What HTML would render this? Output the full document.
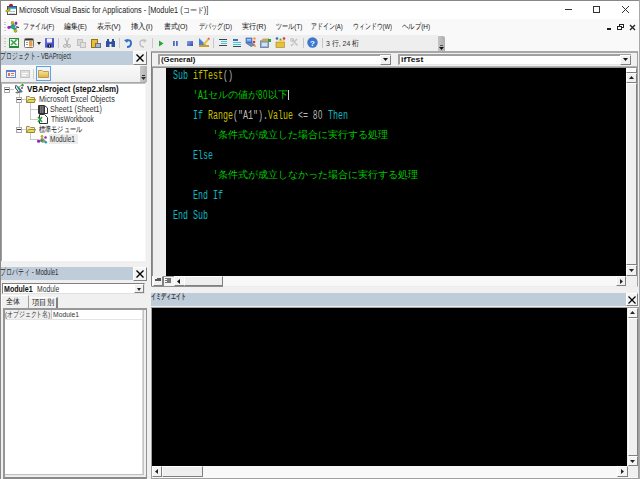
<!DOCTYPE html>
<html><head><meta charset="utf-8">
<style>
*{margin:0;padding:0;box-sizing:border-box}
html,body{width:640px;height:479px;overflow:hidden;background:#f0f0f0;font-family:"Liberation Sans",sans-serif;position:relative}
.a{position:absolute}
.t{position:absolute;white-space:nowrap;line-height:1}
.m{position:absolute;white-space:nowrap;line-height:1;font-size:8px;color:#111;top:23px}
.c{position:absolute;white-space:nowrap;line-height:10px;font-family:"Liberation Mono",monospace;font-size:8.333px;transform:scaleY(1.6);transform-origin:0 0}
.j{position:absolute;white-space:nowrap;line-height:10px;font-size:9.92px}
.sep{position:absolute;top:38px;width:1px;height:10px;background:#c8c8c8}
.btn3d{position:absolute;background:#f0f0f0;border-top:1px solid #fff;border-left:1px solid #fff;border-right:1px solid #808080;border-bottom:1px solid #808080}
.sunk{position:absolute;background:#fff;border-top:1px solid #808080;border-left:1px solid #808080;border-right:1px solid #e0e0e0;border-bottom:1px solid #e0e0e0}
</style></head><body>
<!-- ===== window frame / title ===== -->
<div class="a" style="left:0;top:0;width:640px;height:19px;background:#fff"></div>
<div class="a" style="left:0;top:0;width:640px;height:1px;background:#888"></div>
<div class="a" style="left:0;top:0;width:1px;height:479px;background:#888"></div>
<!-- title icon -->
<svg class="a" style="left:4px;top:3px" width="14" height="13" viewBox="0 0 14 13">
<rect x="3.5" y="3.5" width="9" height="8" fill="#fff" stroke="#505050"/>
<rect x="4" y="4" width="8" height="2" fill="#20c8e8"/>
<rect x="4" y="3.5" width="8" height="1" fill="#3050c0"/>
<rect x="5" y="8" width="6" height="1" fill="#c0c0c0"/><rect x="5" y="10" width="6" height="1" fill="#d0d0d0"/>
<ellipse cx="7" cy="2.3" rx="2" ry="1.5" fill="#c01818"/>
<path d="M1.5 8 L5 5.5 L6.5 6.8 L3 9.5 Z" fill="#c8c000" stroke="#606000" stroke-width="0.5"/>
</svg>
<div id="T1" class="t" style="transform:scaleX(0.879);transform-origin:0.0px 0;left:19.00px;top:6px;font-size:8.3px;color:#222">Microsoft Visual Basic for Applications - [Module1 (コード)]</div>
<!-- title buttons -->
<div class="a" style="left:565px;top:9px;width:7px;height:1px;background:#333"></div>
<div class="a" style="left:593px;top:6px;width:7px;height:7px;border:1px solid #333"></div>
<svg class="a" style="left:621px;top:5px" width="9" height="9" viewBox="0 0 9 9"><path d="M1 1L8 8M8 1L1 8" stroke="#333" stroke-width="1"/></svg>

<!-- ===== menu bar ===== -->
<div class="a" style="left:1px;top:19px;width:639px;height:32px;background:#f9f9f9"></div>
<div class="a" style="left:4px;top:22px;width:2px;height:1px;background:#c8c8c8"></div>
<div class="a" style="left:4px;top:24px;width:2px;height:1px;background:#c8c8c8"></div>
<div class="a" style="left:4px;top:27px;width:2px;height:1px;background:#c8c8c8"></div>
<div class="a" style="left:4px;top:30px;width:2px;height:1px;background:#c8c8c8"></div>
<svg class="a" style="left:7px;top:21px" width="13" height="12" viewBox="0 0 13 12">
<path d="M2.5 6 L6 3 L10.5 6 L8 9Z" fill="#18a0a8" stroke="#106060" stroke-width="0.5"/>
<path d="M10 6 L12 6.5" stroke="#222" stroke-width="1"/>
<ellipse cx="5.5" cy="2" rx="1.3" ry="1.7" fill="#c0c000" stroke="#606000" stroke-width="0.4"/>
<ellipse cx="9" cy="2.3" rx="1.3" ry="1.7" fill="#a818c0"/>
<ellipse cx="2" cy="6.5" rx="1.7" ry="1.4" fill="#a818c0"/>
<circle cx="5.5" cy="6" r="1.1" fill="#20c030"/>
<ellipse cx="8.5" cy="9.8" rx="1.4" ry="1.6" fill="#c0c000" stroke="#606000" stroke-width="0.4"/>
<circle cx="8.5" cy="6" r="0.8" fill="#e0f0f0"/>
</svg>
<div id="T2" class="m" style="transform:scaleX(0.750);transform-origin:2.0px 0;left:22.00px">ファイル(F)</div>
<div id="T3" class="m" style="transform:scaleX(0.852);transform-origin:0.0px 0;left:64.00px">編集(E)</div>
<div id="T4" class="m" style="transform:scaleX(0.889);transform-origin:0.0px 0;left:97.00px">表示(V)</div>
<div id="T5" class="m" style="transform:scaleX(0.917);transform-origin:0.0px 0;left:131.00px">挿入(I)</div>
<div id="T6" class="m" style="transform:scaleX(0.857);transform-origin:0.0px 0;left:164.00px">書式(O)</div>
<div id="T7" class="m" style="transform:scaleX(0.767);transform-origin:0.0px 0;left:199.00px">デバッグ(D)</div>
<div id="T8" class="m" style="transform:scaleX(0.889);transform-origin:0.0px 0;left:242.00px">実行(R)</div>
<div id="T9" class="m" style="transform:scaleX(0.765);transform-origin:0.0px 0;left:276.00px">ツール(T)</div>
<div id="T10" class="m" style="transform:scaleX(0.738);transform-origin:1.0px 0;left:311.00px">アドイン(A)</div>
<div id="T11" class="m" style="transform:scaleX(0.731);transform-origin:1.0px 0;left:353.00px">ウィンドウ(W)</div>
<div id="T12" class="m" style="transform:scaleX(0.800);transform-origin:0.0px 0;left:402.00px">ヘルプ(H)</div>
<!-- mdi buttons -->
<div class="a" style="left:607px;top:28px;width:4px;height:2px;background:#222"></div>
<svg class="a" style="left:617px;top:24px" width="7" height="6" viewBox="0 0 7 6"><rect x="2.5" y="0.5" width="4" height="3" fill="none" stroke="#222"/><rect x="0.5" y="2.5" width="4" height="3" fill="#fff" stroke="#222"/></svg>
<svg class="a" style="left:629px;top:24px" width="7" height="7" viewBox="0 0 7 7"><path d="M1 1L6 6M6 1L1 6" stroke="#222" stroke-width="1.3"/></svg>

<!-- ===== toolbar ===== -->
<div class="a" style="left:1px;top:35px;width:437px;height:16px;background:#eeeeee"></div>
<div class="a" style="left:438px;top:36px;width:7px;height:15px;background:linear-gradient(90deg,#c4c4c4,#b0b0b0);border-top-right-radius:2px"></div>
<div class="a" style="left:440px;top:45px;width:3px;height:1px;background:#555"></div>
<svg class="a" style="left:439px;top:47px" width="5" height="3" viewBox="0 0 5 3"><path d="M0 0H5L2.5 3Z" fill="#111"/></svg>
<div class="a" style="left:4px;top:38px;width:2px;height:1px;background:#c8c8c8"></div><div class="a" style="left:4px;top:41px;width:2px;height:1px;background:#c8c8c8"></div><div class="a" style="left:4px;top:43px;width:2px;height:1px;background:#c8c8c8"></div><div class="a" style="left:4px;top:46px;width:2px;height:1px;background:#c8c8c8"></div>
<!-- excel -->
<svg class="a" style="left:9px;top:38px" width="10" height="10" viewBox="0 0 10 10"><rect x="0.5" y="0.5" width="9" height="9" fill="#f4faf4" stroke="#2a8a3a"/><path d="M2 2L7.5 7M7.5 2L2 7" stroke="#3aa04a" stroke-width="1.6"/><rect x="1" y="8" width="8" height="1" fill="#2a8a3a"/><rect x="6" y="1" width="3" height="1" fill="#80c080"/></svg>
<!-- userform -->
<svg class="a" style="left:24px;top:38px" width="10" height="10" viewBox="0 0 10 10"><rect x="0.5" y="0.5" width="9" height="9" rx="1" fill="#fff" stroke="#777"/><rect x="1" y="1" width="8" height="1.5" fill="#333"/><rect x="5" y="3" width="3.5" height="5.5" fill="#e8a040"/><rect x="2" y="4" width="2" height="1" fill="#999"/><rect x="2" y="6" width="2" height="1" fill="#999"/></svg>
<svg class="a" style="left:37px;top:42px" width="4" height="3" viewBox="0 0 4 3"><path d="M0 0H4L2 3Z" fill="#222"/></svg>
<!-- save -->
<svg class="a" style="left:45px;top:38px" width="10" height="10" viewBox="0 0 10 10"><rect x="0" y="0" width="9" height="9.5" fill="#4a5ad0"/><rect x="0" y="0" width="9" height="9.5" fill="url(#sg)"/><defs><linearGradient id="sg" x1="0" y1="0" x2="1" y2="1"><stop offset="0" stop-color="#8890f0" stop-opacity="0.6"/><stop offset="1" stop-color="#2030a0" stop-opacity="0.4"/></linearGradient></defs><rect x="2" y="0.5" width="5" height="4" fill="#f4f4ff"/><rect x="2.5" y="6.5" width="3.5" height="3" fill="#1a1a30"/><rect x="4" y="7" width="1" height="2" fill="#a0a0c0"/></svg>
<div class="sep" style="left:58px"></div>
<!-- cut copy paste find -->
<svg class="a" style="left:63px;top:38px" width="8" height="10" viewBox="0 0 8 10"><path d="M2 0L5 7M6 0L3 7" stroke="#b0b0b0"/><circle cx="2" cy="8" r="1.5" fill="none" stroke="#b0b0b0"/><circle cx="6" cy="8" r="1.5" fill="none" stroke="#b0b0b0"/></svg>
<div class="a" style="left:77px;top:39px;width:6px;height:7px;background:#d8d8d8;border:1px solid #c0c0c0"></div>
<div class="a" style="left:80px;top:42px;width:6px;height:6px;background:#e0e0e0;border:1px solid #c0c0c0"></div>
<div class="a" style="left:91px;top:39px;width:7px;height:9px;background:#e8c030;border:1px solid #a07010"></div>
<div class="a" style="left:95px;top:43px;width:6px;height:5px;background:#a8b4c8;border:1px solid #607090"></div>
<svg class="a" style="left:105px;top:38px" width="11" height="10" viewBox="0 0 11 10"><rect x="1" y="3" width="3.5" height="6" fill="#3050a0"/><rect x="6.5" y="3" width="3.5" height="6" fill="#3050a0"/><rect x="2" y="1" width="2" height="3" fill="#3050a0"/><rect x="7" y="1" width="2" height="3" fill="#3050a0"/><rect x="4" y="4" width="3" height="2" fill="#3050a0"/></svg>
<div class="sep" style="left:119px"></div>
<svg class="a" style="left:124px;top:38px" width="9" height="10" viewBox="0 0 9 10"><path d="M2 3 Q7 1 7 5 Q7 9 3 9" stroke="#2f6fd0" stroke-width="2" fill="none"/><path d="M0 2 L4 1 L3 5Z" fill="#2f6fd0"/></svg>
<svg class="a" style="left:138px;top:38px" width="9" height="10" viewBox="0 0 9 10"><path d="M7 3 Q2 1 2 5 Q2 9 6 9" stroke="#c0c0c0" stroke-width="1.5" fill="none"/><path d="M9 2 L5 1 L6 5Z" fill="#c0c0c0"/></svg>
<div class="sep" style="left:152px"></div>
<svg class="a" style="left:159px;top:40px" width="5" height="7" viewBox="0 0 5 7"><path d="M0 0.5L4.5 3.5L0 6.5Z" fill="#22a838"/></svg>
<div class="a" style="left:173px;top:41px;width:2px;height:5px;background:linear-gradient(90deg,#3a5cb8,#7c98d8)"></div>
<div class="a" style="left:176px;top:41px;width:2px;height:5px;background:linear-gradient(90deg,#3a5cb8,#7c98d8)"></div>
<div class="a" style="left:187px;top:41px;width:6px;height:5px;background:linear-gradient(135deg,#8aa4e0,#3050b0)"></div>
<svg class="a" style="left:199px;top:37px" width="11" height="11" viewBox="0 0 11 11"><path d="M0 1L7 8H0Z" fill="#4a80d8"/><rect x="0" y="8" width="10" height="2" fill="#d0a020"/><path d="M4 7L8.5 1.5L10 3L5.5 8Z" fill="#e8c040"/><path d="M8.5 1.5L9.5 0.5L11 2L10 3Z" fill="#e05050"/></svg>
<div class="sep" style="left:213px"></div>
<!-- indent/outdent -->
<div class="a" style="left:219px;top:39px;width:8px;height:1px;background:#444"></div>
<div class="a" style="left:221px;top:41px;width:6px;height:1px;background:#40c8e0"></div>
<div class="a" style="left:221px;top:43px;width:6px;height:1px;background:#40c8e0"></div>
<div class="a" style="left:219px;top:45px;width:8px;height:1px;background:#444"></div>
<div class="a" style="left:233px;top:39px;width:5px;height:2px;background:#3a70c8"></div>
<div class="a" style="left:233px;top:42px;width:8px;height:1px;background:#40c8e0"></div>
<div class="a" style="left:233px;top:44px;width:8px;height:1px;background:#40c8e0"></div>
<div class="a" style="left:233px;top:46px;width:8px;height:1px;background:#444"></div>
<svg class="a" style="left:245px;top:37px" width="12" height="11" viewBox="0 0 12 11"><rect x="1" y="1" width="6" height="5" fill="#5a90e0" stroke="#3060b0" stroke-width="0.6"/><rect x="2" y="2.5" width="4" height="0.8" fill="#fff"/><path d="M1.5 6.5L6 9.5L10 8L6 5.5Z" fill="#7090c0" stroke="#405080" stroke-width="0.5"/><circle cx="9.5" cy="1.5" r="1.2" fill="#f0a030"/><circle cx="9" cy="5" r="1.3" fill="#e03030"/><circle cx="10" cy="9" r="1" fill="#f0a030"/></svg>
<svg class="a" style="left:260px;top:37px" width="11" height="11" viewBox="0 0 11 11"><rect x="0.5" y="4" width="8" height="6.5" fill="#a0b4d0" stroke="#6078a0" stroke-width="0.8"/><rect x="2" y="6" width="5" height="3" fill="#d8e0f0"/><path d="M0.5 4L3 1.5H9L8.5 4Z" fill="#c8a848"/><rect x="8" y="2" width="3" height="3" fill="#30a040"/></svg>
<svg class="a" style="left:275px;top:37px" width="11" height="11" viewBox="0 0 11 11"><path d="M1 5H9.5V10.5H1Z" fill="#e8c040" stroke="#a08020" stroke-width="0.6"/><path d="M1 5L4 3H10L9.5 5Z" fill="#f0d870"/><circle cx="2" cy="1.5" r="1.3" fill="#4060d0"/><circle cx="5.5" cy="2.5" r="1" fill="#30b040"/><circle cx="9" cy="1.5" r="1.3" fill="#e03030"/></svg>
<svg class="a" style="left:290px;top:38px" width="9" height="9" viewBox="0 0 9 9"><path d="M2 1.5L7.5 7.5" stroke="#c4c4c4" stroke-width="1.6"/><path d="M7 1L4.5 3.5" stroke="#c4c4c4" stroke-width="1.6"/><circle cx="2" cy="2" r="1.6" fill="none" stroke="#c4c4c4" stroke-width="1"/><path d="M1 8L3.5 5.5" stroke="#c4c4c4" stroke-width="1.6"/></svg>
<div class="sep" style="left:303px"></div>
<svg class="a" style="left:307px;top:37px" width="11" height="11" viewBox="0 0 11 11"><circle cx="5.5" cy="5.5" r="5.2" fill="#3a78d0"/><text x="5.5" y="8.6" font-size="8" font-family="Liberation Sans" font-weight="bold" fill="#fff" text-anchor="middle">?</text></svg>
<div class="sep" style="left:322px"></div>
<div id="T13" class="t" style="transform:scaleX(0.868);transform-origin:0.0px 0;left:326.00px;top:40px;font-size:8px;color:#333">3 行, 24 桁</div>

<!-- ===== project panel ===== -->
<div class="a" style="left:1px;top:51px;width:133px;height:14px;background:#bfcddb"></div>
<div id="T14" class="t" style="transform:scaleX(0.654);transform-origin:1.0px 0;left:0.00px;top:52px;font-size:9px;color:#2a2a2a">プロジェクト - VBAProject</div>
<div class="btn3d" style="left:133px;top:51px;width:14px;height:14px;background:#f4f4f4"></div>
<svg class="a" style="left:136px;top:54px" width="8" height="8" viewBox="0 0 8 8"><path d="M0.5 0.5L7.5 7.5M7.5 0.5L0.5 7.5" stroke="#000" stroke-width="1.4"/></svg>
<!-- project toolbar -->
<div class="a" style="left:1px;top:65px;width:140px;height:17px;background:linear-gradient(#fafafa,#eeeeee)"></div>
<svg class="a" style="left:6px;top:70px" width="10" height="8" viewBox="0 0 10 8"><rect x="0.5" y="0.5" width="9" height="7" fill="#f4f0f0" stroke="#6a8ad0"/><rect x="0" y="0" width="10" height="2" fill="#5a80d0"/><rect x="2" y="3" width="2" height="3" fill="#e07050"/><rect x="5" y="3" width="3" height="1" fill="#e07050"/><rect x="5" y="5" width="3" height="1" fill="#c0a0a0"/></svg>
<svg class="a" style="left:20px;top:70px" width="10" height="8" viewBox="0 0 10 8"><rect x="0.5" y="0.5" width="9" height="7" fill="#dcdcdc" stroke="#c4c4c4"/><rect x="2" y="3" width="6" height="1" fill="#fff"/><rect x="2" y="5" width="4" height="1" fill="#fff"/></svg>
<div class="a" style="left:33px;top:69px;width:1px;height:10px;background:#d0d0d0"></div>
<div class="a" style="left:36px;top:66px;width:15px;height:15px;border:1px solid #5aa0e6;background:#eef4fa"></div>
<svg class="a" style="left:38px;top:69px" width="11" height="9" viewBox="0 0 11 9"><path d="M0.5 1.5H4L5 2.5H10.5V8.5H0.5Z" fill="url(#fg)" stroke="#b08a30" stroke-width="0.8"/><defs><linearGradient id="fg" x1="0" y1="0" x2="0" y2="1"><stop offset="0" stop-color="#fbe8a0"/><stop offset="1" stop-color="#e0b040"/></linearGradient></defs></svg>
<div class="a" style="left:140px;top:66px;width:7px;height:16px;background:linear-gradient(90deg,#c8c8c8,#b4b4b4)"></div>
<div class="a" style="left:142px;top:75px;width:3px;height:1px;background:#333"></div>
<svg class="a" style="left:141px;top:77px" width="5" height="3" viewBox="0 0 5 3"><path d="M0 0H5L2.5 3Z" fill="#333"/></svg>
<div class="a" style="left:1px;top:82px;width:145px;height:1px;background:#a8a8a8"></div>
<!-- tree -->
<div class="a" style="left:1px;top:83px;width:144px;height:178px;background:#fff;border-top:1px solid #c0c0c0;border-left:1px solid #a0a0a0"></div><div class="a" style="left:145px;top:83px;width:1px;height:178px;background:#f6f6f6"></div>
<div class="a" style="left:19px;top:93px;width:1px;height:4px;background:#c8c8c8"></div>
<div class="a" style="left:19px;top:103px;width:1px;height:24px;background:#c8c8c8"></div>
<div class="a" style="left:10px;top:89px;width:4px;height:1px;background:#c8c8c8"></div>
<div class="a" style="left:22px;top:99px;width:4px;height:1px;background:#c8c8c8"></div>
<div class="a" style="left:22px;top:129px;width:4px;height:1px;background:#c8c8c8"></div>
<div class="a" style="left:30px;top:103px;width:1px;height:17px;background:#c8c8c8"></div>
<div class="a" style="left:30px;top:133px;width:1px;height:7px;background:#c8c8c8"></div>
<div class="a" style="left:31px;top:109px;width:7px;height:1px;background:#c8c8c8"></div>
<div class="a" style="left:31px;top:119px;width:7px;height:1px;background:#c8c8c8"></div>
<div class="a" style="left:31px;top:139px;width:7px;height:1px;background:#c8c8c8"></div>
<!-- row1 -->
<div class="a" style="left:4px;top:87px;width:6px;height:6px;border:1px solid #a8a8a8;background:#fff"></div><div class="a" style="left:5px;top:89px;width:4px;height:1px;background:#333"></div>
<svg class="a" style="left:14px;top:84px" width="10" height="10" viewBox="0 0 10 10"><path d="M1 8.5L3 9.5L9 8L7 6Z" fill="#707070"/><path d="M2 1L4 5L7 8L8 7L5 3Z" fill="#1a8a8a"/><path d="M2 1L1.5 4L4 7" stroke="#333" fill="none"/><circle cx="8.5" cy="1.2" r="1.2" fill="#20a020"/><circle cx="8" cy="4" r="1" fill="#a020c0"/><path d="M5 3L8 1" stroke="#a0a040"/></svg>
<div id="T15" class="t" style="transform:scaleX(0.929);transform-origin:0.0px 0;left:27.00px;top:85px;font-size:8.5px;font-weight:bold;color:#111">VBAProject (step2.xlsm)</div>
<!-- row2 -->
<div class="a" style="left:16px;top:97px;width:6px;height:6px;border:1px solid #a8a8a8;background:#fff"></div><div class="a" style="left:17px;top:99px;width:4px;height:1px;background:#333"></div>
<svg class="a" style="left:26px;top:95px" width="10" height="8" viewBox="0 0 10 8"><path d="M0.5 1.5V7.5H8.5V2.5H4.5L3.5 1.5Z" fill="#f0e8a0" stroke="#a09060" stroke-width="1"/><path d="M0.5 7.5L2.5 4.5H9.5L8 7.5Z" fill="#e8dc50" stroke="#8a7a30" stroke-width="0.8"/></svg>
<div id="T16" class="t" style="transform:scaleX(0.874);transform-origin:0.0px 0;left:39.00px;top:95px;font-size:8.3px;color:#333">Microsoft Excel Objects</div>
<!-- row3 -->
<svg class="a" style="left:38px;top:105px" width="10" height="9" viewBox="0 0 10 9"><path d="M0.5 0.5H6.5L9.5 3V8.5H0.5Z" fill="#fff" stroke="#333"/><rect x="1" y="1" width="6" height="7" fill="#333"/><rect x="2.5" y="1" width="0.8" height="7" fill="#bbb"/><rect x="4.5" y="1" width="0.8" height="7" fill="#bbb"/></svg>
<div id="T17" class="t" style="transform:scaleX(0.860);transform-origin:0.0px 0;left:50.00px;top:105px;font-size:8.3px;color:#333">Sheet1 (Sheet1)</div>
<!-- row4 -->
<svg class="a" style="left:37px;top:114px" width="11" height="10" viewBox="0 0 11 10"><path d="M2.5 0.5H7.5L10.5 3.5V9.5H2.5Z" fill="#fff" stroke="#333"/><path d="M1 3L5 8M5 3L1 8" stroke="#30a040" stroke-width="1.6"/></svg>
<div id="T18" class="t" style="transform:scaleX(0.811);transform-origin:0.0px 0;left:51.00px;top:115px;font-size:8.3px;color:#333">ThisWorkbook</div>
<!-- row5 -->
<div class="a" style="left:16px;top:127px;width:6px;height:6px;border:1px solid #a8a8a8;background:#fff"></div><div class="a" style="left:17px;top:129px;width:4px;height:1px;background:#333"></div>
<svg class="a" style="left:26px;top:125px" width="10" height="8" viewBox="0 0 10 8"><path d="M0.5 1.5V7.5H8.5V2.5H4.5L3.5 1.5Z" fill="#f0e8a0" stroke="#a09060" stroke-width="1"/><path d="M0.5 7.5L2.5 4.5H9.5L8 7.5Z" fill="#e8dc50" stroke="#8a7a30" stroke-width="0.8"/></svg>
<div id="T19" class="t" style="transform:scaleX(0.768);transform-origin:0.0px 0;left:39.00px;top:125px;font-size:8.3px;color:#111">標準モジュール</div>
<!-- row6 -->
<svg class="a" style="left:37px;top:135px" width="11" height="9" viewBox="0 0 11 9"><path d="M2 6L5 2L9 6L6 8Z" fill="#9a9a9a"/><circle cx="5" cy="1.4" r="1.4" fill="#b8b000"/><circle cx="8.5" cy="2.5" r="1.3" fill="#a020b0"/><circle cx="1.6" cy="6.2" r="1.6" fill="#a020b0"/><circle cx="5" cy="5.5" r="1.2" fill="#20a030"/><circle cx="8.8" cy="7.3" r="1.3" fill="#20a0a0"/></svg>
<div class="a" style="left:49px;top:134px;width:29px;height:10px;background:#ececec"></div>
<div id="T20" class="t" style="transform:scaleX(0.781);transform-origin:0.0px 0;left:50.00px;top:135px;font-size:8.3px;color:#333">Module1</div>

<!-- ===== properties panel ===== -->
<div class="a" style="left:1px;top:267px;width:133px;height:13px;background:#bfcddb"></div>
<div id="T21" class="t" style="transform:scaleX(0.663);transform-origin:1.0px 0;left:0.00px;top:268px;font-size:9px;color:#2a2a2a">プロパティ - Module1</div>
<div class="btn3d" style="left:133px;top:267px;width:14px;height:14px;background:#f4f4f4"></div>
<svg class="a" style="left:136px;top:270px" width="8" height="8" viewBox="0 0 8 8"><path d="M0.5 0.5L7.5 7.5M7.5 0.5L0.5 7.5" stroke="#000" stroke-width="1.4"/></svg>
<div class="sunk" style="left:2px;top:283px;width:143px;height:11px"></div>
<div id="T22" class="t" style="transform:scaleX(0.853);transform-origin:0.0px 0;left:4.00px;top:285px;font-size:8.3px;font-weight:bold;color:#111">Module1</div>
<div id="T23" class="t" style="transform:scaleX(0.815);transform-origin:0.0px 0;left:37.00px;top:285px;font-size:8.3px;color:#333">Module</div>
<div class="btn3d" style="left:134px;top:284px;width:10px;height:9px"></div>
<svg class="a" style="left:137px;top:288px" width="4" height="3" viewBox="0 0 4 3"><path d="M0 0H4L2 3Z" fill="#222"/></svg>
<!-- tabs -->
<div class="a" style="left:1px;top:295px;width:28px;height:13px;border-top:1px solid #fff;border-left:1px solid #fff;border-right:1px solid #a0a0a0"></div>
<div id="T24" class="t" style="transform:scaleX(0.875);transform-origin:0.0px 0;left:6.00px;top:297px;font-size:8.4px;color:#222">全体</div>
<div class="a" style="left:29px;top:297px;width:29px;height:11px;border-top:1px solid #fff;border-right:2px solid #808080"></div>
<div id="T25" class="t" style="transform:scaleX(0.917);transform-origin:0.0px 0;left:32.00px;top:298px;font-size:8.4px;color:#222">項目別</div>
<!-- grid -->
<div class="a" style="left:3px;top:308px;width:144px;height:171px;background:#f0f0f0;border-top:2px solid #979797;border-left:2px solid #979797;border-right:1px solid #909090;border-bottom:2px solid #8a8a8a"></div>
<div class="a" style="left:5px;top:310px;width:137px;height:164px;background:#fff"></div>
<div class="a" style="left:142px;top:310px;width:1px;height:165px;background:#d8d8d8"></div>
<div class="a" style="left:143px;top:310px;width:1px;height:165px;background:#c4c4c4"></div>
<div class="a" style="left:5px;top:474px;width:139px;height:1px;background:#c0c0c0"></div>
<div class="a" style="left:5px;top:475px;width:141px;height:1px;background:#e8e8e8"></div>
<div class="a" style="left:5px;top:310px;width:46px;height:9px;background:#f0f0f0"></div>
<div class="a" style="left:5px;top:319px;width:137px;height:1px;background:#e4e4e4"></div>
<div class="a" style="left:51px;top:310px;width:1px;height:9px;background:#c8c8c8"></div>
<div id="T26" class="t" style="transform:scaleX(0.738);transform-origin:0.0px 0;left:5.00px;top:311px;font-size:7.8px;color:#333">(オブジェクト名)</div>
<div id="T27" class="t" style="transform:scaleX(0.867);transform-origin:0.0px 0;left:53.00px;top:311px;font-size:7.8px;color:#333">Module1</div>

<!-- ===== code window ===== -->
<div class="a" style="left:151px;top:51px;width:487px;height:236px;background:#f0f0f0;border:1px solid #a0a0a0;border-left:1px solid #808080;border-top:2px solid #a8a8a8;border-bottom:1px solid #f0f0f0"></div>
<div class="a" style="left:152px;top:66px;width:485px;height:2px;background:linear-gradient(#c8c8c8,#808080)"></div>
<div class="a" style="left:158px;top:54px;width:233px;height:11px;background:#fff;border-top:2px solid #a0a0a0;border-left:2px solid #a0a0a0;border-right:1px solid #c8c8c8;border-bottom:1px solid #e8e8e8"></div>
<div id="T28" class="t" style="transform:scaleX(1.000);transform-origin:0.0px 0;left:161.00px;top:56px;font-size:7.8px;font-weight:bold;color:#111">(General)</div>
<div class="btn3d" style="left:380px;top:55px;width:11px;height:10px"></div>
<svg class="a" style="left:383px;top:58px" width="5" height="3" viewBox="0 0 5 3"><path d="M0 0H5L2.5 3Z" fill="#111"/></svg>
<div class="a" style="left:398px;top:54px;width:233px;height:11px;background:#fff;border-top:2px solid #a0a0a0;border-left:2px solid #a0a0a0;border-right:1px solid #c8c8c8;border-bottom:1px solid #e8e8e8"></div>
<div id="T29" class="t" style="transform:scaleX(1.100);transform-origin:0.0px 0;left:401.00px;top:56px;font-size:7.8px;font-weight:bold;color:#111">ifTest</div>
<div class="btn3d" style="left:620px;top:55px;width:11px;height:10px"></div>
<svg class="a" style="left:623px;top:58px" width="5" height="3" viewBox="0 0 5 3"><path d="M0 0H5L2.5 3Z" fill="#111"/></svg>
<!-- margin -->
<div class="a" style="left:152px;top:68px;width:14px;height:208px;background:#eeeeee;border-left:1px solid #909090"></div>
<div class="a" style="left:166px;top:68px;width:460px;height:208px;background:#000"></div>
<!-- vscroll -->
<div class="a" style="left:626px;top:68px;width:11px;height:208px;background:#f0f0f0"></div>
<div class="btn3d" style="left:626px;top:68px;width:11px;height:5px;background:#fff"></div>
<div class="btn3d" style="left:626px;top:73px;width:11px;height:10px"></div>
<svg class="a" style="left:629px;top:76px" width="5" height="3" viewBox="0 0 5 3"><path d="M0 3H5L2.5 0Z" fill="#222"/></svg>
<div class="btn3d" style="left:626px;top:83px;width:11px;height:182px;background:#f0f0f0"></div>
<div class="btn3d" style="left:626px;top:265px;width:11px;height:11px"></div>
<svg class="a" style="left:629px;top:269px" width="5" height="3" viewBox="0 0 5 3"><path d="M0 0H5L2.5 3Z" fill="#222"/></svg>
<!-- hscroll -->
<div class="a" style="left:152px;top:276px;width:485px;height:10px;background:#f8f8f8"></div><div class="a" style="left:152px;top:286px;width:485px;height:1px;background:#ececec"></div>
<div class="a" style="left:152px;top:286px;width:71px;height:1px;background:#909090"></div>
<div class="btn3d" style="left:153px;top:276px;width:10px;height:10px;border-top-color:#f0f0f0"></div>
<div class="a" style="left:155px;top:278px;width:6px;height:3px;background:#555"></div>
<div class="a" style="left:155px;top:278px;width:2px;height:1px;background:#fff"></div>
<div class="a" style="left:163px;top:276px;width:11px;height:10px;background:#f4f4f4;border-left:1px solid #808080;border-top:1px solid #a0a0a0"></div>
<div class="a" style="left:165px;top:278px;width:6px;height:5px;background:#777"></div>
<div class="a" style="left:165px;top:279px;width:2px;height:1px;background:#fff"></div>
<div class="a" style="left:165px;top:281px;width:2px;height:1px;background:#fff"></div>
<div class="btn3d" style="left:174px;top:276px;width:11px;height:10px;background:#f4f4f4"></div>
<svg class="a" style="left:177px;top:279px" width="3" height="5" viewBox="0 0 3 5"><path d="M3 0V5L0 2.5Z" fill="#111"/></svg>
<div class="btn3d" style="left:184px;top:276px;width:39px;height:10px;background:#eeeeee"></div>
<div class="btn3d" style="left:616px;top:276px;width:10px;height:10px"></div>
<svg class="a" style="left:620px;top:279px" width="3" height="5" viewBox="0 0 3 5"><path d="M0 0V5L3 2.5Z" fill="#222"/></svg>
<div class="a" style="left:626px;top:276px;width:11px;height:10px;background:#f0f0f0"></div>

<!-- code text -->
<div id="code">
<div class="c" style="left:173.00px;top:68px;color:#10b8c0">Sub</div>
<div class="c" style="left:193.00px;top:68px;color:#c8c000">ifTest</div>
<div class="c" style="left:223.00px;top:68px;color:#b8b8b8">()</div>
<div class="c" style="left:193.00px;top:88px;color:#00c800">'A1</div>
<div id="J1" class="j" style="left:208.00px;top:90px;color:#00c800">セルの値が</div>
<div class="c" style="left:258.00px;top:88px;color:#00c800;font-family:'Liberation Sans',sans-serif;font-size:7.8px;letter-spacing:0.66px">80</div>
<div id="J2" class="j" style="left:268.00px;top:90px;color:#00c800">以下</div>
<div class="c" style="left:193.00px;top:108px;color:#10b8c0">If</div>
<div class="c" style="left:208.00px;top:108px;color:#c8c000">Range</div>
<div class="c" style="left:233.00px;top:108px;color:#b8b8b8">("A1").</div>
<div class="c" style="left:268.00px;top:108px;color:#c8c000">Value</div>
<div class="c" style="left:298.00px;top:108px;color:#b8b8b8">&lt;=</div><div class="c" style="left:313.00px;top:108px;color:#b8b8b8;font-family:'Liberation Sans',sans-serif;font-size:7.8px;letter-spacing:0.66px">80</div>
<div class="c" style="left:328.00px;top:108px;color:#10b8c0">Then</div>
<div class="c" style="left:213.00px;top:128px;color:#00c800">'</div>
<div id="J3" class="j" style="left:218.00px;top:130px;color:#00c800">条件式が成立した場合に実行する処理</div>
<div class="c" style="left:193.00px;top:148px;color:#10b8c0">Else</div>
<div class="c" style="left:213.00px;top:168px;color:#00c800">'</div>
<div id="J4" class="j" style="left:218.00px;top:170px;color:#00c800">条件式が成立しなかった場合に実行する処理</div>
<div class="c" style="left:193.00px;top:188px;color:#10b8c0">End If</div>
<div class="c" style="left:173.00px;top:208px;color:#10b8c0">End Sub</div>
<div class="a" style="left:288px;top:90px;width:1px;height:10px;background:#d0d0d0"></div>
</div>

<!-- ===== immediate window ===== -->
<div class="a" style="left:151px;top:293px;width:476px;height:13px;background:#bfcddb"></div>
<div id="T30" class="t" style="transform:scaleX(0.630);transform-origin:0.0px 0;left:151.00px;top:293px;font-size:8px;font-weight:bold;color:#333">イミディエイト</div>
<div class="btn3d" style="left:626px;top:293px;width:12px;height:13px;background:#f4f4f4"></div>
<svg class="a" style="left:628px;top:296px" width="8" height="8" viewBox="0 0 8 8"><path d="M0.5 0.5L7.5 7.5M7.5 0.5L0.5 7.5" stroke="#000" stroke-width="1.2"/></svg>
<div class="a" style="left:151px;top:307px;width:488px;height:172px;background:#f0f0f0;border:1px solid #a0a0a0"></div>
<div class="a" style="left:152px;top:308px;width:475px;height:158px;background:#000"></div>
<div class="a" style="left:627px;top:308px;width:11px;height:158px;background:#f0f0f0"></div>
<div class="btn3d" style="left:628px;top:308px;width:10px;height:10px;background:#f4f4f4"></div>
<svg class="a" style="left:630px;top:311px" width="5" height="3" viewBox="0 0 5 3"><path d="M0 3H5L2.5 0Z" fill="#222"/></svg>
<div class="btn3d" style="left:628px;top:318px;width:10px;height:138px;background:#f0f0f0"></div>
<div class="btn3d" style="left:628px;top:456px;width:10px;height:10px;background:#f4f4f4"></div>
<svg class="a" style="left:630px;top:460px" width="5" height="3" viewBox="0 0 5 3"><path d="M0 0H5L2.5 3Z" fill="#222"/></svg>
<div class="a" style="left:152px;top:466px;width:486px;height:12px;background:#f8f8f8"></div>
<div class="btn3d" style="left:152px;top:466px;width:10px;height:11px;background:#f4f4f4"></div>
<svg class="a" style="left:155px;top:469px" width="3" height="5" viewBox="0 0 3 5"><path d="M3 0V5L0 2.5Z" fill="#222"/></svg>
<div class="btn3d" style="left:162px;top:466px;width:41px;height:11px;background:#eeeeee"></div>
<div class="btn3d" style="left:617px;top:466px;width:11px;height:11px;background:#f4f4f4"></div>
<svg class="a" style="left:621px;top:469px" width="3" height="5" viewBox="0 0 3 5"><path d="M0 0V5L3 2.5Z" fill="#222"/></svg>
<div class="a" style="left:628px;top:466px;width:10px;height:11px;background:#f0f0f0"></div>
<div class="a" style="left:639px;top:0;width:1px;height:479px;background:#a8a8a8"></div>
<script>(function(){var W={"T1": 189.177, "T2": 31.664, "T3": 22.724, "T4": 23.711, "T5": 21.607, "T6": 23.621, "T7": 33.065, "T8": 24.1, "T9": 26.177, "T10": 31.492, "T11": 38.663, "T12": 28.088, "T13": 33.201, "T14": 70.652, "T15": 91.724, "T16": 75.765, "T17": 51.976, "T18": 42.882, "T19": 43.008, "T20": 24.858, "T21": 58.033, "T22": 28.709, "T23": 22.183, "T24": 14, "T25": 22.008, "T26": 45.168, "T27": 25.942, "T28": 34.234, "T29": 22.241, "J1": 50, "J2": 20, "J3": 170, "J4": 200, "T30": 35.28};for(var id in W){var e=document.getElementById(id);if(!e)continue;var t=e.style.transform||"";e.style.transform="none";var w=e.getBoundingClientRect().width;e.style.transform=t;if(w>0){var sc=W[id]/w;if(t.indexOf("scaleX")>=0){e.style.transform=t.replace(/scaleX\([^)]*\)/,"scaleX("+sc.toFixed(4)+")");}else if(Math.abs(w-W[id])>0.75){e.style.transform="scaleX("+sc.toFixed(4)+")";e.style.transformOrigin="0 0";}}}})();</script>
</body></html>
